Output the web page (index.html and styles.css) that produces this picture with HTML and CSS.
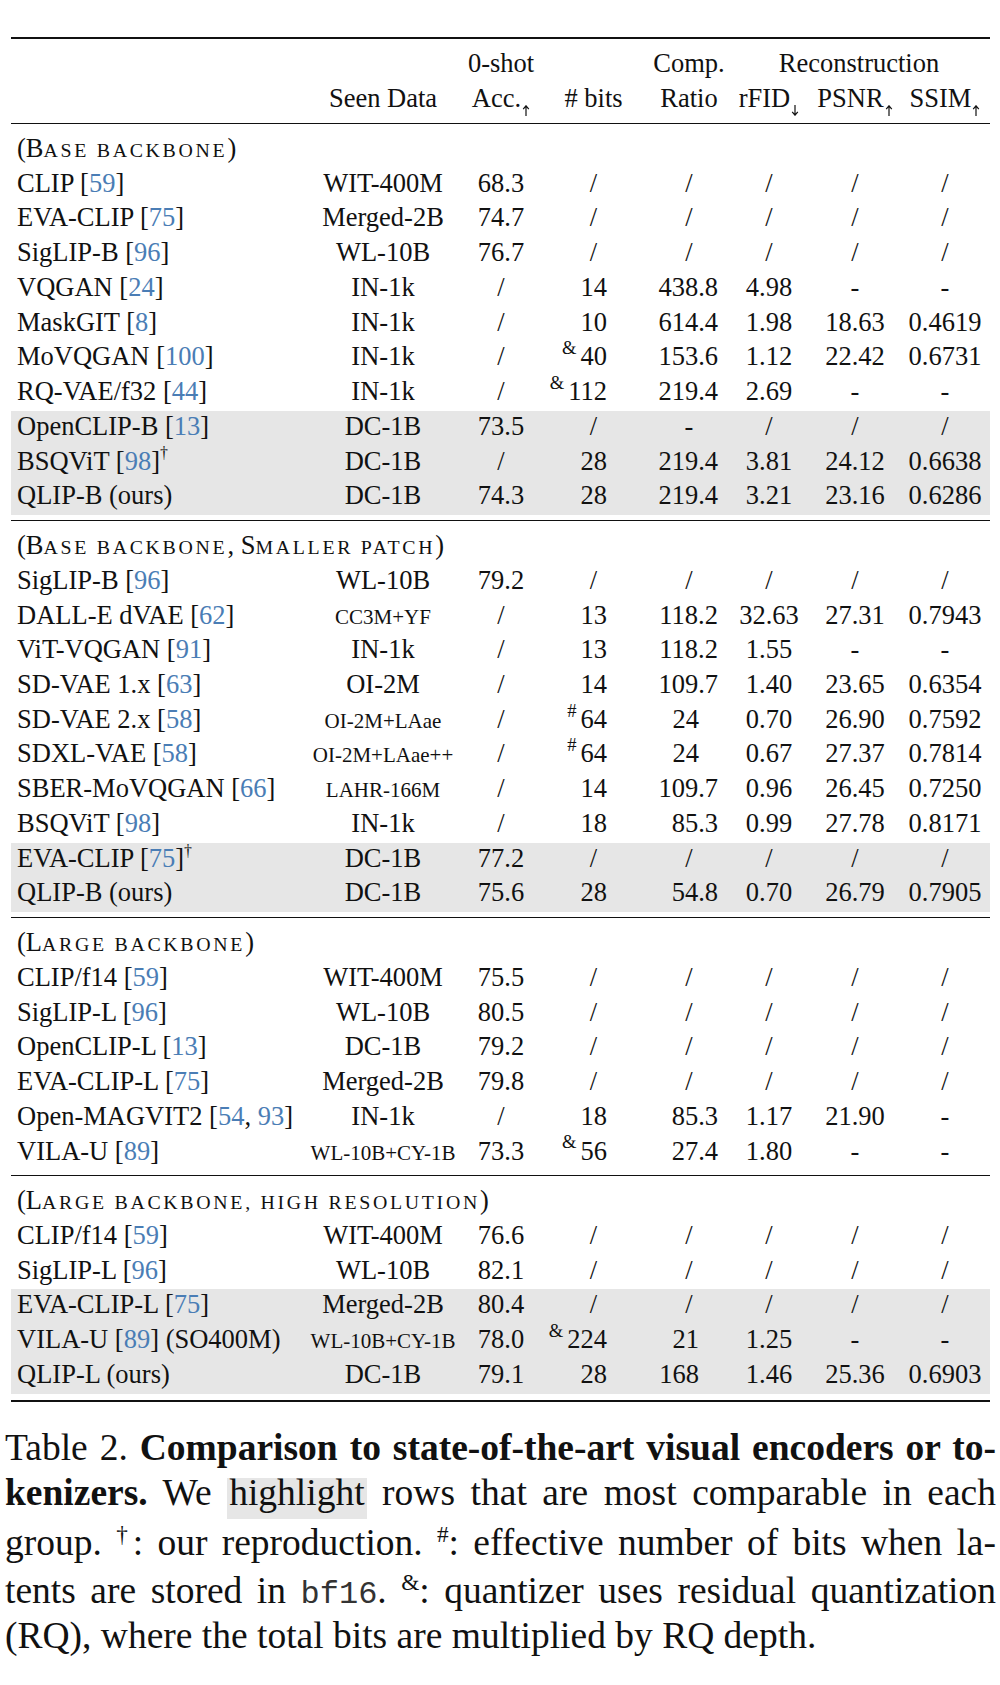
FILE: index.html
```html
<!DOCTYPE html>
<html lang="en">
<head>
<meta charset="utf-8">
<title>Table 2</title>
<link rel="stylesheet" href="styles.css">
</head>
<body>
<div class="tbl">
  <div class="thead">
    <div class="row">
      <span class="m"></span><span></span><span>0-shot</span><span></span><span>Comp.</span><span class="span3">Reconstruction</span>
    </div>
    <div class="row">
      <span class="m"></span><span>Seen Data</span><span>Acc.<svg class="ar" viewBox="0 0 8 11" aria-label="↑"><path d="M4 11V1M1.2 4.2L4 0.8L6.8 4.2"/></svg></span><span># bits</span><span>Ratio</span><span>rFID<svg class="ar" viewBox="0 0 8 11" aria-label="↓"><path d="M4 0V10M1.2 6.8L4 10.2L6.8 6.8"/></svg></span><span>PSNR<svg class="ar" viewBox="0 0 8 11" aria-label="↑"><path d="M4 11V1M1.2 4.2L4 0.8L6.8 4.2"/></svg></span><span>SSIM<svg class="ar" viewBox="0 0 8 11" aria-label="↑"><path d="M4 11V1M1.2 4.2L4 0.8L6.8 4.2"/></svg></span>
    </div>
  </div>

  <div class="group">
    <div class="row"><span class="gh">(B<span class="sc">ase backbone</span>)</span></div>
    <div class="row"><span class="m">CLIP [<span class="cn">59</span>]</span><span>WIT-400M</span><span>68.3</span><span class="bt c">/</span><span class="cr c">/</span><span>/</span><span>/</span><span>/</span></div>
    <div class="row"><span class="m">EVA-CLIP [<span class="cn">75</span>]</span><span>Merged-2B</span><span>74.7</span><span class="bt c">/</span><span class="cr c">/</span><span>/</span><span>/</span><span>/</span></div>
    <div class="row"><span class="m">SigLIP-B [<span class="cn">96</span>]</span><span>WL-10B</span><span>76.7</span><span class="bt c">/</span><span class="cr c">/</span><span>/</span><span>/</span><span>/</span></div>
    <div class="row"><span class="m">VQGAN [<span class="cn">24</span>]</span><span>IN-1k</span><span>/</span><span class="bt">14</span><span class="cr">438.8</span><span>4.98</span><span>-</span><span>-</span></div>
    <div class="row"><span class="m">MaskGIT [<span class="cn">8</span>]</span><span>IN-1k</span><span>/</span><span class="bt">10</span><span class="cr">614.4</span><span>1.98</span><span>18.63</span><span>0.4619</span></div>
    <div class="row"><span class="m">MoVQGAN [<span class="cn">100</span>]</span><span>IN-1k</span><span>/</span><span class="bt"><sup>&amp;</sup>40</span><span class="cr">153.6</span><span>1.12</span><span>22.42</span><span>0.6731</span></div>
    <div class="row"><span class="m">RQ-VAE/f32 [<span class="cn">44</span>]</span><span>IN-1k</span><span>/</span><span class="bt"><sup>&amp;</sup>112</span><span class="cr">219.4</span><span>2.69</span><span>-</span><span>-</span></div>
    <div class="row hl"><span class="m">OpenCLIP-B [<span class="cn">13</span>]</span><span>DC-1B</span><span>73.5</span><span class="bt c">/</span><span class="cr c">-</span><span>/</span><span>/</span><span>/</span></div>
    <div class="row hl"><span class="m">BSQViT [<span class="cn">98</span>]<sup>†</sup></span><span>DC-1B</span><span>/</span><span class="bt">28</span><span class="cr">219.4</span><span>3.81</span><span>24.12</span><span>0.6638</span></div>
    <div class="row hl"><span class="m">QLIP-B (ours)</span><span>DC-1B</span><span>74.3</span><span class="bt">28</span><span class="cr">219.4</span><span>3.21</span><span>23.16</span><span>0.6286</span></div>
  </div>

  <div class="group">
    <div class="row"><span class="gh">(B<span class="sc">ase backbone</span>, S<span class="sc">maller patch</span>)</span></div>
    <div class="row"><span class="m">SigLIP-B [<span class="cn">96</span>]</span><span>WL-10B</span><span>79.2</span><span class="bt c">/</span><span class="cr c">/</span><span>/</span><span>/</span><span>/</span></div>
    <div class="row"><span class="m">DALL-E dVAE [<span class="cn">62</span>]</span><span><span class="sm">CC3M+YF</span></span><span>/</span><span class="bt">13</span><span class="cr">118.2</span><span>32.63</span><span>27.31</span><span>0.7943</span></div>
    <div class="row"><span class="m">ViT-VQGAN [<span class="cn">91</span>]</span><span>IN-1k</span><span>/</span><span class="bt">13</span><span class="cr">118.2</span><span>1.55</span><span>-</span><span>-</span></div>
    <div class="row"><span class="m">SD-VAE 1.x [<span class="cn">63</span>]</span><span>OI-2M</span><span>/</span><span class="bt">14</span><span class="cr">109.7</span><span>1.40</span><span>23.65</span><span>0.6354</span></div>
    <div class="row"><span class="m">SD-VAE 2.x [<span class="cn">58</span>]</span><span><span class="sm">OI-2M+LAae</span></span><span>/</span><span class="bt"><sup>#</sup>64</span><span class="cr i">24</span><span>0.70</span><span>26.90</span><span>0.7592</span></div>
    <div class="row"><span class="m">SDXL-VAE [<span class="cn">58</span>]</span><span><span class="sm">OI-2M+LAae++</span></span><span>/</span><span class="bt"><sup>#</sup>64</span><span class="cr i">24</span><span>0.67</span><span>27.37</span><span>0.7814</span></div>
    <div class="row"><span class="m">SBER-MoVQGAN [<span class="cn">66</span>]</span><span><span class="sm">LAHR-166M</span></span><span>/</span><span class="bt">14</span><span class="cr">109.7</span><span>0.96</span><span>26.45</span><span>0.7250</span></div>
    <div class="row"><span class="m">BSQViT [<span class="cn">98</span>]</span><span>IN-1k</span><span>/</span><span class="bt">18</span><span class="cr">85.3</span><span>0.99</span><span>27.78</span><span>0.8171</span></div>
    <div class="row hl"><span class="m">EVA-CLIP [<span class="cn">75</span>]<sup>†</sup></span><span>DC-1B</span><span>77.2</span><span class="bt c">/</span><span class="cr c">/</span><span>/</span><span>/</span><span>/</span></div>
    <div class="row hl"><span class="m">QLIP-B (ours)</span><span>DC-1B</span><span>75.6</span><span class="bt">28</span><span class="cr">54.8</span><span>0.70</span><span>26.79</span><span>0.7905</span></div>
  </div>

  <div class="group">
    <div class="row"><span class="gh">(L<span class="sc">arge backbone</span>)</span></div>
    <div class="row"><span class="m">CLIP/f14 [<span class="cn">59</span>]</span><span>WIT-400M</span><span>75.5</span><span class="bt c">/</span><span class="cr c">/</span><span>/</span><span>/</span><span>/</span></div>
    <div class="row"><span class="m">SigLIP-L [<span class="cn">96</span>]</span><span>WL-10B</span><span>80.5</span><span class="bt c">/</span><span class="cr c">/</span><span>/</span><span>/</span><span>/</span></div>
    <div class="row"><span class="m">OpenCLIP-L [<span class="cn">13</span>]</span><span>DC-1B</span><span>79.2</span><span class="bt c">/</span><span class="cr c">/</span><span>/</span><span>/</span><span>/</span></div>
    <div class="row"><span class="m">EVA-CLIP-L [<span class="cn">75</span>]</span><span>Merged-2B</span><span>79.8</span><span class="bt c">/</span><span class="cr c">/</span><span>/</span><span>/</span><span>/</span></div>
    <div class="row"><span class="m">Open-MAGVIT2 [<span class="cn">54</span>, <span class="cn">93</span>]</span><span>IN-1k</span><span>/</span><span class="bt">18</span><span class="cr">85.3</span><span>1.17</span><span>21.90</span><span>-</span></div>
    <div class="row"><span class="m">VILA-U [<span class="cn">89</span>]</span><span><span class="sm">WL-10B+CY-1B</span></span><span>73.3</span><span class="bt"><sup>&amp;</sup>56</span><span class="cr">27.4</span><span>1.80</span><span>-</span><span>-</span></div>
  </div>

  <div class="group last">
    <div class="row"><span class="gh">(L<span class="sc">arge backbone, high resolution</span>)</span></div>
    <div class="row"><span class="m">CLIP/f14 [<span class="cn">59</span>]</span><span>WIT-400M</span><span>76.6</span><span class="bt c">/</span><span class="cr c">/</span><span>/</span><span>/</span><span>/</span></div>
    <div class="row"><span class="m">SigLIP-L [<span class="cn">96</span>]</span><span>WL-10B</span><span>82.1</span><span class="bt c">/</span><span class="cr c">/</span><span>/</span><span>/</span><span>/</span></div>
    <div class="row hl"><span class="m">EVA-CLIP-L [<span class="cn">75</span>]</span><span>Merged-2B</span><span>80.4</span><span class="bt c">/</span><span class="cr c">/</span><span>/</span><span>/</span><span>/</span></div>
    <div class="row hl"><span class="m">VILA-U [<span class="cn">89</span>] (SO400M)</span><span><span class="sm">WL-10B+CY-1B</span></span><span>78.0</span><span class="bt"><sup>&amp;</sup>224</span><span class="cr i">21</span><span>1.25</span><span>-</span><span>-</span></div>
    <div class="row hl"><span class="m">QLIP-L (ours)</span><span>DC-1B</span><span>79.1</span><span class="bt">28</span><span class="cr i">168</span><span>1.46</span><span>25.36</span><span>0.6903</span></div>
  </div>
</div>

<p class="cap">
  <span class="ln">Table 2. <b>Comparison to state-of-the-art visual encoders or to-</b></span>
  <span class="ln"><b>kenizers.</b> We <span class="hlw">highlight</span> rows that are most comparable in each</span>
  <span class="ln l3">group. <sup>†</sup>: our reproduction. <sup>#</sup>: effective number of bits when la-</span>
  <span class="ln l4">tents are stored in <code>bf16</code>. <sup>&amp;</sup>: quantizer uses residual quantization</span>
  <span class="ln end">(RQ), where the total bits are multiplied by RQ depth.</span>
</p>
</body>
</html>
```

FILE: styles.css
```css
* { box-sizing: border-box; }

body {
  margin: 0;
  background: #fff;
  color: #111;
  font-family: "Liberation Serif", "Times New Roman", serif;
}

.tbl {
  margin: 37px 0 0 11px;
  width: 979px;
  font-size: 26.5px;
  border-top: 2px solid #111;
  border-bottom: 2px solid #111;
}

.thead {
  padding: 9px 0 5.5px;
  border-bottom: 1px solid #111;
}

.group {
  padding: 9px 0 5px;
}

.group + .group {
  border-top: 1px solid #111;
}

.group.last {
  padding-bottom: 6px;
}

.row {
  display: grid;
  grid-template-columns: 290px 164px 72px 113px 78px 82px 90px 90px;
  height: 34.74px;
  line-height: 30.74px;
  white-space: nowrap;
}

.row > span {
  text-align: center;
}

.row > .m {
  text-align: left;
  padding-left: 6px;
}

.row > .gh {
  grid-column: 1 / -1;
  text-align: left;
  padding-left: 6px;
}

.row > .span3 {
  grid-column: span 3;
}

.row > .bt {
  text-align: right;
  padding-right: 43px;
}

.row > .cr {
  text-align: right;
  padding-right: 10px;
}

.row > .cr.i {
  padding-right: 29px;
}

.row > .c {
  text-align: center;
  padding-right: 0;
}

.hl {
  background: #e6e6e6;
}

.sc {
  font-size: 0.75em;
  text-transform: uppercase;
  letter-spacing: 0.135em;
}

.sm {
  font-size: 21px;
}

.cn {
  color: #4a7db5;
}

.tbl sup {
  font-size: 0.6em;
  line-height: 0;
  vertical-align: baseline;
  position: relative;
  top: -0.7em;
}

.bt sup {
  font-size: 0.7em;
  top: -0.6em;
  margin-right: 4px;
}

.ar {
  display: inline-block;
  width: 8px;
  height: 11px;
  vertical-align: -9px;
  margin-left: 1px;
  fill: none;
  stroke: #111;
  stroke-width: 1.2;
}

.cap {
  margin: 23px 0 0 5px;
  width: 991px;
  font-size: 37.5px;
  line-height: 45.5px;
  color: #111;
}

.ln {
  display: block;
  text-align: justify;
  text-align-last: justify;
}

.ln.l3 {
  margin-top: 4.5px;
}

.ln.l4 {
  margin-top: 2px;
}

.ln.end {
  text-align-last: left;
}

.cap sup {
  font-size: 0.62em;
  line-height: 0;
}

.cap code {
  font-family: "Liberation Mono", "Courier New", monospace;
  font-size: 32px;
  line-height: 1;
  color: #333;
}

.hlw {
  padding: 0 2px 6px;
  background: linear-gradient(#e6e6e6, #e6e6e6) 0 6px / 100% calc(100% - 6px) no-repeat;
}
```
